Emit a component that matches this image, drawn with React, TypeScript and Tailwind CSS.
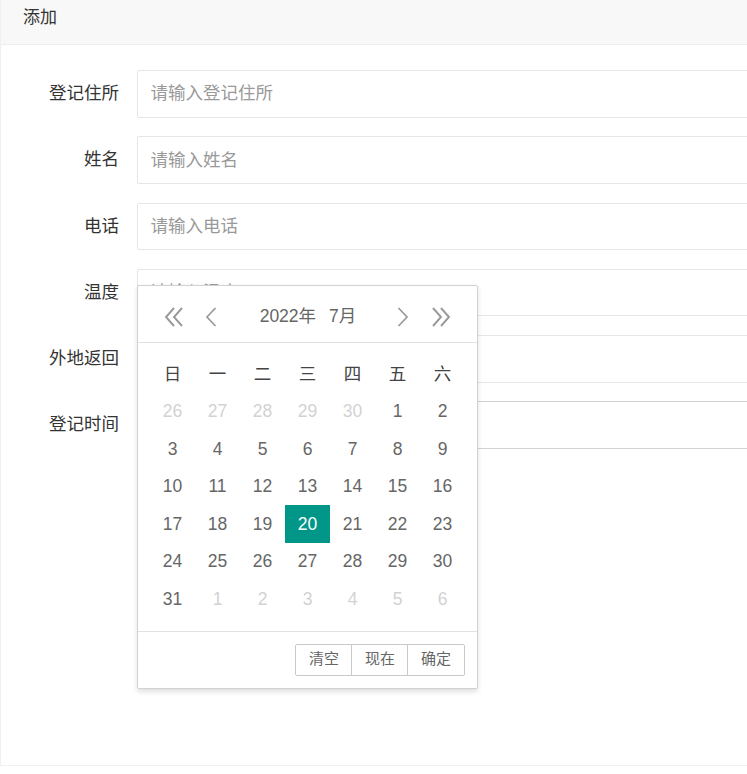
const font = { fontFamily: '"Liberation Sans", "Noto Sans CJK SC", sans-serif' }

const fields = [
  { label: '登记住所', placeholder: '请输入登记住所' },
  { label: '姓名', placeholder: '请输入姓名' },
  { label: '电话', placeholder: '请输入电话' },
  { label: '温度', placeholder: '请输入温度' },
  { label: '外地返回', placeholder: '' },
  { label: '登记时间', placeholder: '', focused: true },
]

const weekdays = ['日', '一', '二', '三', '四', '五', '六']

type Day = { n: number; other?: boolean; active?: boolean }

function buildDays(): Day[] {
  const days: Day[] = []
  for (let n = 26; n <= 30; n++) days.push({ n, other: true })
  for (let n = 1; n <= 31; n++) days.push({ n, active: n === 20 })
  for (let n = 1; n <= 6; n++) days.push({ n, other: true })
  return days
}

function DoubleLeft() {
  return (
    <svg width="22" height="20" viewBox="0 0 22 20" fill="none" stroke="#999" strokeWidth="1.9">
      <path d="M11 1 L3 10 L11 19" />
      <path d="M19 1 L11 10 L19 19" />
    </svg>
  )
}

function DoubleRight() {
  return (
    <svg width="22" height="20" viewBox="0 0 22 20" fill="none" stroke="#999" strokeWidth="1.9">
      <path d="M3 1 L11 10 L3 19" />
      <path d="M11 1 L19 10 L11 19" />
    </svg>
  )
}

function Left() {
  return (
    <svg width="12" height="20" viewBox="0 0 12 20" fill="none" stroke="#999" strokeWidth="1.7">
      <path d="M10.5 1 L2 10 L10.5 19" />
    </svg>
  )
}

function Right() {
  return (
    <svg width="12" height="20" viewBox="0 0 12 20" fill="none" stroke="#999" strokeWidth="1.7">
      <path d="M1.5 1 L10 10 L1.5 19" />
    </svg>
  )
}

function DatePicker() {
  const days = buildDays()
  return (
    <div className="absolute left-[137px] top-[285px] w-[341px] bg-white border border-[#d2d2d2] rounded-[2px] shadow-[0_2.5px_5px_rgba(0,0,0,0.12)]">
      {/* header: year / month switcher */}
      <div className="flex items-center h-[57px] pt-[5px] pl-[25px] pr-[25px] border-b border-[#e2e2e2]">
        <DoubleLeft />
        <span className="ml-[20px] flex"><Left /></span>
        <div className="flex-1 flex justify-center gap-[13px] pl-[2px] text-[17.5px] text-[#666]">
          <span>2022年</span>
          <span>7月</span>
        </div>
        <span className="mr-[21px] flex"><Right /></span>
        <DoubleRight />
      </div>

      {/* calendar grid */}
      <div className="px-[12px] pt-[12px] pb-[13px]">
        <div className="grid grid-cols-7">
          {weekdays.map((w) => (
            <div key={w} className="h-[37.5px] flex items-center justify-center text-[17.5px] text-[#444]">
              {w}
            </div>
          ))}
          {days.map((d, i) => (
            <div
              key={i}
              className={
                'h-[37.5px] flex items-center justify-center text-[17.5px] ' +
                (d.active ? 'bg-[#009688] text-white' : d.other ? 'text-[#d2d2d2]' : 'text-[#666]')
              }
            >
              {d.n}
            </div>
          ))}
        </div>
      </div>

      {/* footer buttons */}
      <div className="flex justify-end h-[57px] items-center px-[12.5px] border-t border-[#e2e2e2]">
        {['清空', '现在', '确定'].map((b, i) => (
          <button
            key={b}
            type="button"
            className={
              'h-[32px] px-[12.5px] text-[15px] text-[#666] bg-white border border-[#c9c9c9] ' +
              (i === 0 ? 'rounded-l-[2px]' : '-ml-px') +
              (i === 2 ? ' rounded-r-[2px]' : '')
            }
          >
            {b}
          </button>
        ))}
      </div>
    </div>
  )
}

export default function App() {
  return (
    <div className="relative w-full h-[774px] overflow-hidden bg-white" style={font}>
      <div className="h-[766px] border-l border-b border-[#f0f0f0]">
        <div className="h-[45px] bg-[#f8f8f8] border-b border-[#eeeeee] pl-[22px] leading-[36px] text-[17px] text-[#333]">
          添加
        </div>

        <div className="pt-[25px]">
          {fields.map((f) => (
            <div key={f.label} className="flex mb-[18.75px]">
              <label className="w-[136px] shrink-0 pr-[18px] text-right text-[17.5px] leading-[47.5px] text-[#333]">
                {f.label}
              </label>
              <input
                readOnly
                placeholder={f.placeholder}
                className={
                  'w-[700px] shrink-0 h-[47.5px] px-[12.5px] text-[17.5px] bg-white border rounded-[2px] outline-none placeholder:text-[#999] ' +
                  (f.focused ? 'border-[#d2d2d2]' : 'border-[#e6e6e6]')
                }
              />
            </div>
          ))}
        </div>
      </div>

      <DatePicker />
    </div>
  )
}
